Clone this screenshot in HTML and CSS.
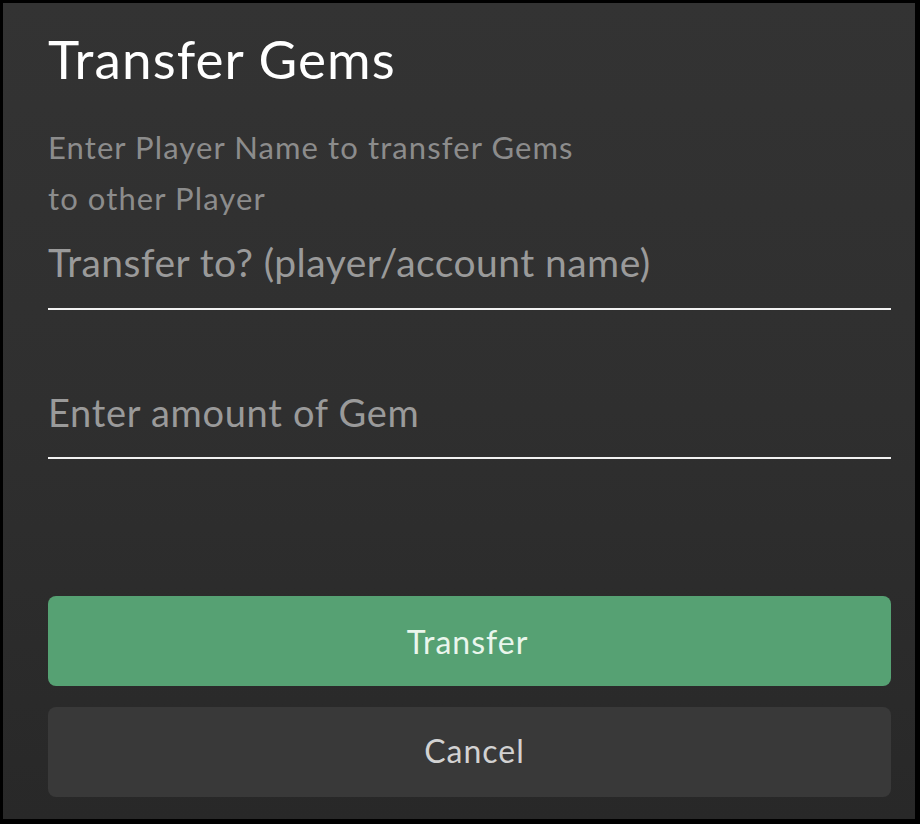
FILE: index.html
```html
<!DOCTYPE html>
<html>
<head>
<meta charset="utf-8">
<link rel="stylesheet" href="styles.css">
</head>
<body>
<div class="panel">
  <h1 class="title">Transfer Gems</h1>
  <p class="subtitle">Enter Player Name to transfer Gems<br>to other Player</p>
  <div class="field field-name"><span class="placeholder">Transfer to? (player/account name)</span></div>
  <div class="field field-amount"><span class="placeholder">Enter amount of Gem</span></div>
  <div class="actions">
    <div class="btn btn-primary">Transfer</div>
    <div class="btn btn-secondary">Cancel</div>
  </div>
</div>
</body>
</html>
```

FILE: styles.css
```css
html, body {
  margin: 0;
  padding: 0;
  background: #000;
}
body {
  width: 920px;
  height: 824px;
  overflow: hidden;
  font-family: "Lato", "Noto Sans", sans-serif;
}
.panel {
  box-sizing: border-box;
  margin: 3px 5px 5px 3px;
  width: 912px;
  height: 816px;
  padding: 24px 24px 0 45px;
  background: linear-gradient(180deg, #333333 0%, #2f2f2f 50%, #282828 100%);
  display: flex;
  flex-direction: column;
}
.title {
  margin: 0;
  font-size: 53px;
  line-height: 64px;
  font-weight: 400;
  letter-spacing: 1.1px;
  color: #ffffff;
}
.subtitle {
  margin: 31px 0 0 0;
  font-size: 31px;
  line-height: 51px;
  letter-spacing: 1.1px;
  color: #8c8c8c;
}
.field {
  border-bottom: 2px solid #f2f2f2;
  display: flex;
}
.field-name {
  margin-top: 13px;
  padding-bottom: 21px;
}
.field-amount {
  padding-top: 77px;
  padding-bottom: 20px;
}
.placeholder {
  font-size: 39px;
  line-height: 50px;
  letter-spacing: 0.45px;
  color: #9a9a9a;
}
.field-amount .placeholder {
  font-size: 38px;
  letter-spacing: 0.7px;
}
.actions {
  margin-top: 137px;
  display: flex;
  flex-direction: column;
  gap: 21px;
}
.btn {
  box-sizing: border-box;
  height: 90px;
  border-radius: 8px;
  display: flex;
  align-items: center;
  justify-content: center;
  font-size: 32px;
  letter-spacing: 1px;
}
.btn-primary {
  background: #56a173;
  color: #eaf6ec;
  padding-right: 4px;
}
.btn-secondary {
  background: #393939;
  color: #d2d2d2;
  padding-left: 10px;
  padding-bottom: 3px;
}
```
